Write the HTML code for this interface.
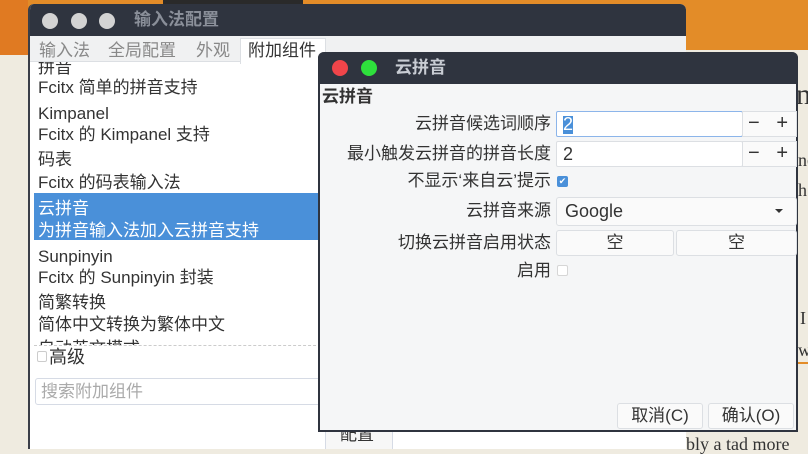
<!DOCTYPE html>
<html><head><meta charset="utf-8"><style>
*{margin:0;padding:0;box-sizing:border-box}
body{width:808px;height:443px;overflow:hidden;position:relative;background:#efebe0;font-family:"Liberation Sans","Noto Sans CJK SC",sans-serif;color:#333}
.a{position:absolute}
.t{position:absolute;white-space:nowrap;font-size:17px;line-height:20px}
</style></head><body>
<div class="a" style="left:0;top:0;width:808px;height:52px;background:#e38c28"></div>
<div class="a" style="left:0;top:0;width:28px;height:55px;background:#e07a22"></div>
<div class="a" style="left:163px;top:0;width:140px;height:5px;background:#2a2a2a"></div>
<div class="a" style="left:686px;top:50px;width:122px;height:393px;background:#efebe0"></div>
<div class="t" style="left:796px;top:80px;font-size:30px;line-height:30px;font-family:'Liberation Serif',serif;color:#333">n</div>
<div class="t" style="left:798px;top:150px;font-family:'Liberation Serif',serif;font-size:18px">ne</div>
<div class="t" style="left:798px;top:180px;font-family:'Liberation Serif',serif;font-size:18px">h</div>
<div class="t" style="left:800px;top:308px;font-family:'Liberation Serif',serif;font-size:18px">I</div>
<div class="t" style="left:798px;top:340px;font-family:'Liberation Serif',serif;font-size:18px">w</div>
<div class="a" style="left:797px;top:362px;width:11px;height:2px;background:#e38c28"></div>
<div class="t" style="left:686px;top:434px;font-family:'Liberation Serif',serif;font-size:18px">bly a tad more</div>

<!-- window 1 -->
<div class="a" style="left:28px;top:4px;width:658px;height:445px;background:#fff;border-radius:6px 6px 0 0;border-left:2px solid #3a3e48;overflow:hidden">
  <div class="a" style="left:0;top:0;width:658px;height:32px;background:#2f343f"></div>
  <div class="a" style="left:12px;top:9px;width:16px;height:16px;border-radius:50%;background:#d3d3d3"></div>
  <div class="a" style="left:41px;top:9px;width:16px;height:16px;border-radius:50%;background:#d3d3d3"></div>
  <div class="a" style="left:69px;top:9px;width:16px;height:16px;border-radius:50%;background:#d3d3d3"></div>
  <div class="t" style="left:104px;top:6px;color:#8a8f99;font-weight:bold">输入法配置</div>
  <div class="a" style="left:0;top:32px;width:658px;height:26px;background:#f0f1f2;border-bottom:1px solid #dcdfe3"></div>
  <div class="t" style="left:9px;top:37px;color:#888">输入法</div>
  <div class="t" style="left:78px;top:37px;color:#888">全局配置</div>
  <div class="t" style="left:166px;top:37px;color:#888">外观</div>
  <div class="a" style="left:210px;top:34px;width:86px;height:26px;background:#fff;border:1px solid #dcdfe3;border-bottom:none"></div>
  <div class="t" style="left:218px;top:37px;color:#333">附加组件</div>
  <div class="a" style="left:4px;top:58px;width:292px;height:284px;border-bottom:1px dashed #ccc;overflow:hidden">
    <div class="t" style="left:4px;top:-4px">拼音</div>
    <div class="t" style="left:4px;top:16px">Fcitx 简单的拼音支持</div>
    <div class="t" style="left:4px;top:42px">Kimpanel</div>
    <div class="t" style="left:4px;top:63px">Fcitx 的 Kimpanel 支持</div>
    <div class="t" style="left:4px;top:88px">码表</div>
    <div class="t" style="left:4px;top:111px">Fcitx 的码表输入法</div>
    <div class="a" style="left:0;top:131px;width:292px;height:47px;background:#4a90d9"></div>
    <div class="t" style="left:4px;top:137px;color:#fff">云拼音</div>
    <div class="t" style="left:4px;top:159px;color:#fff">为拼音输入法加入云拼音支持</div>
    <div class="t" style="left:4px;top:185px">Sunpinyin</div>
    <div class="t" style="left:4px;top:206px">Fcitx 的 Sunpinyin 封装</div>
    <div class="t" style="left:4px;top:231px">简繁转换</div>
    <div class="t" style="left:4px;top:253px">简体中文转换为繁体中文</div>
    <div class="t" style="left:4px;top:277px">自动英文模式</div>
  </div>
  <div class="a" style="left:7px;top:347px;width:10px;height:11px;border:1px solid #ccc;border-radius:2px"></div>
  <div class="t" style="left:19px;top:343px;font-size:18px">高级</div>
  <div class="a" style="left:5px;top:374px;width:291px;height:27px;border:1px solid #d6dbe5;border-radius:3px"></div>
  <div class="t" style="left:11px;top:378px;color:#aaa">搜索附加组件</div>
  <div class="a" style="left:295px;top:418px;width:68px;height:30px;border:1px solid #d6dbe5;border-radius:3px;background:#f7f7f7"></div>
  <div class="t" style="left:310px;top:421px">配置</div>
</div>

<!-- window 2 -->
<div class="a" style="left:318px;top:52px;width:480px;height:380px;background:#f5f6f7;border:2px solid #2f343f;border-top:none;border-radius:6px 6px 0 0">
  <div class="a" style="left:-2px;top:0;width:480px;height:32px;background:#2f343f;border-radius:6px 6px 0 0"></div>
  <div class="a" style="left:12px;top:8px;width:16px;height:16px;border-radius:50%;background:#f0454a"></div>
  <div class="a" style="left:41px;top:8px;width:16px;height:16px;border-radius:50%;background:#2ee03c"></div>
  <div class="t" style="left:75px;top:6px;color:#c8ccd3;font-weight:bold">云拼音</div>
  <div class="t" style="left:2px;top:35px;font-weight:bold">云拼音</div>
  <div class="t" style="right:245px;top:62px">云拼音候选词顺序</div>
  <div class="a" style="left:236px;top:59px;width:187px;height:26px;background:#fff;border:1px solid #8cb5ea;border-radius:2px"></div>
  <div class="a" style="left:243px;top:64px;width:10px;height:18px;background:#4a90d9"></div>
  <div class="t" style="left:243px;top:62px;color:#fff;font-size:18px">2</div>
  <div class="a" style="left:422px;top:59px;width:55px;height:26px;background:#fafafa;border:1px solid #dcdfe3"></div>
  <div class="t" style="left:428px;top:61px;font-size:20px">−&nbsp;&nbsp;&nbsp;+</div>
  <div class="t" style="right:245px;top:92px">最小触发云拼音的拼音长度</div>
  <div class="a" style="left:236px;top:89px;width:187px;height:26px;background:#fff;border:1px solid #dcdfe3;border-radius:2px"></div>
  <div class="t" style="left:243px;top:92px;font-size:18px">2</div>
  <div class="a" style="left:422px;top:89px;width:55px;height:26px;background:#fafafa;border:1px solid #dcdfe3"></div>
  <div class="t" style="left:428px;top:91px;font-size:20px">−&nbsp;&nbsp;&nbsp;+</div>
  <div class="t" style="right:245px;top:119px">不显示‘来自云’提示</div>
  <div class="a" style="left:237px;top:124px;width:11px;height:11px;background:#4a90d9;border-radius:2px;color:#fff;font-size:9px;line-height:11px;text-align:center">✔</div>
  <div class="t" style="right:245px;top:149px">云拼音来源</div>
  <div class="a" style="left:236px;top:145px;width:241px;height:29px;background:#fafafa;border:1px solid #dcdfe3;border-radius:3px"></div>
  <div class="t" style="left:245px;top:149px;font-size:18px">Google</div>
  <div class="a" style="left:455px;top:157px;width:0;height:0;border-left:4px solid transparent;border-right:4px solid transparent;border-top:4px solid #333"></div>
  <div class="t" style="right:245px;top:181px">切换云拼音启用状态</div>
  <div class="a" style="left:236px;top:178px;width:118px;height:26px;background:#fafafa;border:1px solid #dcdfe3;border-radius:3px;text-align:center;font-size:17px;line-height:24px">空</div>
  <div class="a" style="left:356px;top:178px;width:121px;height:26px;background:#fafafa;border:1px solid #dcdfe3;border-radius:3px;text-align:center;font-size:17px;line-height:24px">空</div>
  <div class="t" style="right:245px;top:209px">启用</div>
  <div class="a" style="left:237px;top:213px;width:11px;height:11px;background:#fff;border:1px solid #d6d6d6;border-radius:2px"></div>
  <div class="a" style="left:297px;top:351px;width:86px;height:26px;background:#fafafa;border:1px solid #dcdfe3;border-radius:3px;text-align:center;font-size:17px;line-height:24px">取消(C)</div>
  <div class="a" style="left:388px;top:351px;width:86px;height:26px;background:#fafafa;border:1px solid #dcdfe3;border-radius:3px;text-align:center;font-size:17px;line-height:24px">确认(O)</div>
</div>
</body></html>
